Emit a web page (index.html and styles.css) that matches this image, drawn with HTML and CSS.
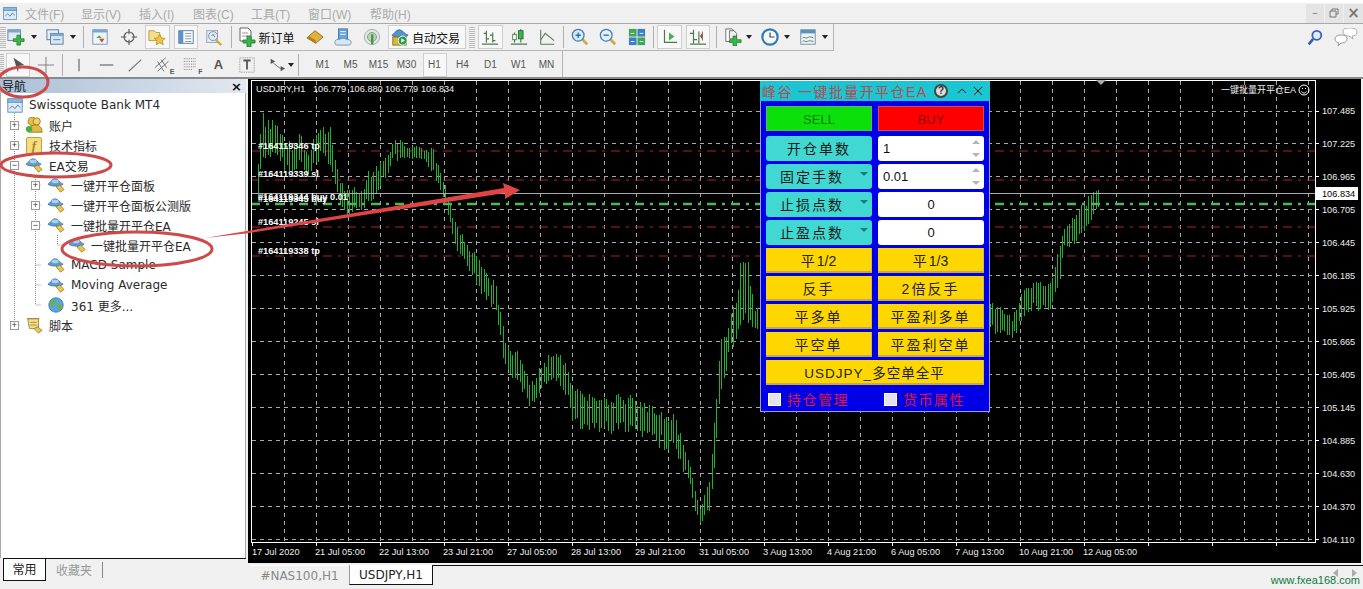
FILE: index.html
```html
<!DOCTYPE html>
<html lang="zh">
<head>
<meta charset="utf-8">
<title>MetaTrader 4</title>
<link rel="stylesheet" href="styles.css">
</head>
<body>
<svg class="defs" width="0" height="0">
  <symbol id="term" viewBox="0 0 20 20"><rect x="2" y="5" width="16" height="13" fill="#dcebf7" stroke="#5b8fbf"/><rect x="2" y="3" width="16" height="4" fill="#8db8dc" stroke="#5b8fbf"/><path d="M4 14l3-3 3 3 3-4 3 3" fill="none" stroke="#4a78a0"/></symbol>
  <symbol id="ea" viewBox="0 0 20 20"><path d="M1 9c3-1 4-6 8-6s5 5 9 6c-2 3-15 3-17 0z" fill="#5b9bd0" stroke="#3b6f9f" stroke-width=".8"/><ellipse cx="9" cy="6" rx="4" ry="2" fill="#a9d1ee"/><path d="M10 12l4-2 5 5-4 3z" fill="#e8c650" stroke="#8c7420" stroke-width=".8"/></symbol>
  <symbol id="acc" viewBox="0 0 20 20"><circle cx="8" cy="6" r="4.500" fill="#e7be4c" stroke="#9a7a1c"/><circle cx="13" cy="6" r="4" fill="#f0cf6c" stroke="#9a7a1c"/><path d="M4 18c0-6 4-8 8-8s7 3 7 8z" fill="#e2b944" stroke="#9a7a1c"/><circle cx="4.500" cy="14.500" r="3.500" fill="#45b045"/></symbol>
  <symbol id="scr" viewBox="0 0 20 20"><path d="M3 3h12v11H5z" fill="#f3dd8f" stroke="#a5842a"/><path d="M2 3h14M6 7h7M6 10h7" stroke="#a5842a" fill="none"/><path d="M10 14l4-2 5 4-4 3z" fill="#e8c650" stroke="#8c7420" stroke-width=".8"/></symbol>
  <symbol id="globe" viewBox="0 0 20 20"><circle cx="10" cy="10" r="8" fill="#5aa5e0" stroke="#3b78b0"/><path d="M5 5c3-2 5 0 5 2s-4 2-4 5-2-1-3-3zM12 9c3-1 5 1 5 3s-3 5-4 3-3-5-1-6z" fill="#6db04a"/></symbol>
  <symbol id="newchart" viewBox="0 0 20 20"><rect x="1" y="2" width="14" height="12" fill="#dfeaf5" stroke="#5b7fa5"/><rect x="1" y="2" width="14" height="3" fill="#7ea6cc"/><path d="M11 8h4v4h4v3h-4v4h-4v-4H7v-3h4z" fill="#3cb54a" stroke="#157a28" stroke-width=".8"/></symbol>
  <symbol id="profiles" viewBox="0 0 20 20"><rect x="1" y="2" width="13" height="11" fill="#e6eff8" stroke="#4f78a5"/><rect x="5" y="6" width="14" height="12" fill="#dbe8f4" stroke="#4f78a5"/><rect x="5" y="6" width="14" height="3" fill="#7ea6cc"/><path d="M8 13h8" stroke="#4f78a5"/></symbol>
  <symbol id="market" viewBox="0 0 20 20"><rect x="2" y="2" width="16" height="16" fill="#eef5fa" stroke="#6b93b8"/><rect x="2" y="2" width="16" height="3" fill="#7ea6cc"/><path d="M6 11l3-3 3 3z" fill="#3cb54a"/><path d="M9 12l3 4 3-4z" fill="#d8402c"/></symbol>
  <symbol id="cross" viewBox="0 0 20 20"><circle cx="10" cy="10" r="5.500" fill="none" stroke="#555" stroke-width="1.200"/><path d="M10 1v6M10 13v6M1 10h6M13 10h6" stroke="#555" stroke-width="1.200"/></symbol>
  <symbol id="fav" viewBox="0 0 20 20"><path d="M1 3h6l2 2h4v9H1z" fill="#f4dd8e" stroke="#b3983d"/><path d="M13 7l2 4 4 .5-3 3 1 4-4-2-4 2 1-4-3-3 4-.5z" fill="#f0c832" stroke="#a5842a" stroke-width=".8"/></symbol>
  <symbol id="nav" viewBox="0 0 20 20"><rect x="2" y="3" width="16" height="14" fill="#fff" stroke="#4f78a5"/><rect x="2" y="3" width="5" height="14" fill="#5c93c8"/><path d="M9 6h7M9 9h7M9 12h7M9 15h7" stroke="#6b93b8"/></symbol>
  <symbol id="tester" viewBox="0 0 20 20"><rect x="2" y="3" width="12" height="13" fill="#e8eef5" stroke="#8aa0b8"/><circle cx="9" cy="9" r="5" fill="#d8ecf8" stroke="#6b93b8"/><path d="M12 13l6 6" stroke="#d6a93b" stroke-width="2.500"/><path d="M7 9l2-2 2 3" fill="none" stroke="#c85050"/></symbol>
  <symbol id="order" viewBox="0 0 20 20"><path d="M3 1h8l3 3v10H3z" fill="#fff" stroke="#666"/><path d="M5 6h6M5 9h6" stroke="#999"/><path d="M10 9h4v4h4v3h-4v4h-4v-4H6v-3h4z" fill="#3cb54a" stroke="#157a28" stroke-width=".8"/></symbol>
  <symbol id="gold" viewBox="0 0 20 20"><path d="M1 11L10 3l9 7-8 7z" fill="#e2b13c" stroke="#8c6a1c"/><path d="M1 11l10 6v-3L3 9z" fill="#b47f20"/></symbol>
  <symbol id="cloud" viewBox="0 0 20 20"><rect x="5" y="1" width="10" height="11" fill="#6aa5d8" stroke="#3b78b0"/><path d="M7 4h6M7 7h6" stroke="#fff"/><path d="M1 16c0-3 3-4 5-3 1-2 7-2 8 0 3-1 5 1 5 3s-1 3-3 3H4c-2 0-3-1-3-3z" fill="#d6e6f2" stroke="#6b93b8"/></symbol>
  <symbol id="signal" viewBox="0 0 20 20"><circle cx="10" cy="10" r="8.500" fill="#dfe8ea" stroke="#9aa8aa"/><circle cx="10" cy="10" r="5" fill="#b7d4b0" stroke="#7a9a78"/><rect x="9" y="7" width="2.500" height="11" fill="#4e8f3e"/></symbol>
  <symbol id="auto" viewBox="0 0 20 20"><path d="M1 8c3-1 4-6 8-6s6 5 10 6c-3 3-15 3-18 0z" fill="#4f98cf" stroke="#2f6f9f"/><rect x="2" y="10" width="15" height="9" fill="#d9b93c" stroke="#8c7420"/><circle cx="13" cy="14" r="5" fill="#21a04a" stroke="#fff"/><path d="M11.500 11.500l4 2.500-4 2.500z" fill="#fff"/></symbol>
  <symbol id="bars" viewBox="0 0 20 20"><path d="M6 3v13M3 6h3M6 12h3M13 5v11M10 8h3M13 14h3M1 18h18" fill="none" stroke="#4a7a4a" stroke-width="1.300"/></symbol>
  <symbol id="candle" viewBox="0 0 20 20"><path d="M5 5v11M12 1v15M1 18h18" stroke="#4a7a4a" stroke-width="1.300"/><rect x="3" y="7" width="4" height="6" fill="#fff" stroke="#4a7a4a"/><rect x="9.500" y="3" width="5" height="9" fill="#36b54a" stroke="#2a6a2a"/></symbol>
  <symbol id="line" viewBox="0 0 20 20"><path d="M3 2v16h15" fill="none" stroke="#5a7a5a" stroke-width="1.200"/><path d="M3 13l5-7 10 8" fill="none" stroke="#5a7a5a" stroke-width="1.200"/></symbol>
  <symbol id="zin" viewBox="0 0 20 20"><path d="M12 12l6 6" stroke="#d6a93b" stroke-width="3"/><circle cx="8" cy="8" r="6.500" fill="#d5eafa" stroke="#3f7fb8" stroke-width="1.400"/><path d="M5 8h6M8 5v6" stroke="#2f6fa8" stroke-width="1.500"/></symbol>
  <symbol id="zout" viewBox="0 0 20 20"><path d="M12 12l6 6" stroke="#d6a93b" stroke-width="3"/><circle cx="8" cy="8" r="6.500" fill="#e2f1fb" stroke="#3f7fb8" stroke-width="1.400"/><path d="M5 8h6" stroke="#2f6fa8" stroke-width="1.500"/></symbol>
  <symbol id="tile" viewBox="0 0 20 20"><rect x="1" y="1" width="8.500" height="8.500" fill="#3ea85a"/><rect x="10.500" y="1" width="8.500" height="8.500" fill="#3b7fc4"/><rect x="1" y="10.500" width="8.500" height="8.500" fill="#3b7fc4"/><rect x="10.500" y="10.500" width="8.500" height="8.500" fill="#3ea85a"/><path d="M3 6h4M13 6h4M3 15h4M13 15h4" stroke="#fff"/></symbol>
  <symbol id="scroll" viewBox="0 0 20 20"><path d="M5 2v14h14M5 7v6" fill="none" stroke="#4a7a4a" stroke-width="1.300"/><path d="M10 5l6 4.500-6 4.500z" fill="#3cb54a"/></symbol>
  <symbol id="shift" viewBox="0 0 20 20"><path d="M5 2v15M1 6h4M5 13h4M11 4v13M1 18h18" fill="none" stroke="#4a7a4a" stroke-width="1.300"/><path d="M15 5l-3 4 3 4z" fill="#d8402c"/><path d="M15 4v10" stroke="#666"/></symbol>
  <symbol id="tpl" viewBox="0 0 20 20"><path d="M2 1h7l3 3v11H2z" fill="#fff" stroke="#666"/><path d="M6 3h5l3 3v6H6z" fill="#eee" stroke="#666"/><path d="M10 9h4v4h5v3h-5v4h-4v-4H6v-3h4z" fill="#3cb54a" stroke="#157a28" stroke-width=".8"/></symbol>
  <symbol id="clock" viewBox="0 0 20 20"><circle cx="10" cy="10" r="8.500" fill="#f4f8fb" stroke="#2f78b8" stroke-width="2.400"/><path d="M10 5v5h5" fill="none" stroke="#444" stroke-width="1.300"/></symbol>
  <symbol id="indic" viewBox="0 0 20 20"><rect x="2" y="2" width="16" height="16" fill="#eef2f5" stroke="#6b8aa5"/><rect x="2" y="2" width="16" height="4" fill="#5f90bd"/><path d="M4 11c2-2 3 1 5 0s3-2 7 0M4 15c2-2 3 1 5 0s3-1 7 0" fill="none" stroke="#5a7a5a"/></symbol>
  <symbol id="search" viewBox="0 0 20 20"><circle cx="12" cy="7" r="5" fill="#dfeaf8" stroke="#3a5fb0" stroke-width="2"/><path d="M8 11l-5 6" stroke="#3a5fb0" stroke-width="3"/></symbol>
  <symbol id="chat" viewBox="0 0 24 20"><path d="M9 3c0-2 3-3 7-3s7 1 7 4-3 4-5 4l1 3-4-3c-4 0-6-2-6-5z" fill="#fff" stroke="#aaa"/><path d="M1 11c0-3 3-4 6-4s6 1 6 4-3 4-6 4l-3 3 1-3c-2 0-4-2-4-4z" fill="#fff" stroke="#999"/></symbol>
  <symbol id="pointer" viewBox="0 0 20 20"><path d="M5 2l12 8-6 1-1 7z" fill="#555"/></symbol>
  <symbol id="thin" viewBox="0 0 20 20"><path d="M10 1v18M1 10h18" stroke="#777"/></symbol>
  <symbol id="vline" viewBox="0 0 20 20"><path d="M10 3v14" stroke="#666" stroke-width="1.300"/></symbol>
  <symbol id="hline" viewBox="0 0 20 20"><path d="M2 10h15" stroke="#666" stroke-width="1.300"/></symbol>
  <symbol id="trend" viewBox="0 0 20 20"><path d="M3 17L17 4" stroke="#777" stroke-width="1.300"/></symbol>
  <symbol id="channel" viewBox="0 0 20 20"><path d="M1 13L13 2M4 17L16 6M4 6l7 11M8 4l6 9" stroke="#666" fill="none"/></symbol>
  <symbol id="fib" viewBox="0 0 20 20"><path d="M2 3h14M2 6h14M2 9h14M2 12h14M2 15h10" stroke="#777" stroke-dasharray="1 1"/></symbol>
  <symbol id="textlbl" viewBox="0 0 20 20"><rect x="2" y="2" width="16" height="16" fill="none" stroke="#888" stroke-dasharray="1 1"/><path d="M6 5h8M10 5v10" stroke="#555" stroke-width="2"/></symbol>
  <symbol id="arrows" viewBox="0 0 20 20"><path d="M3 3l5 3-5 3zM14 11l5 3-5 3z" fill="#555"/><path d="M6 8l8 6" stroke="#666"/></symbol>
</svg>

<div class="app">
  <header class="menubar">
    <svg class="ic menu-ic"><use href="#term"/></svg>
    <nav class="menus">
      <span class="m1">文件(F)</span><span class="m2">显示(V)</span><span class="m3">插入(I)</span><span class="m4">图表(C)</span><span class="m5">工具(T)</span><span class="m6">窗口(W)</span><span class="m7">帮助(H)</span>
    </nav>
    <div class="winbtns"><span>–</span><span><svg class="rest" viewBox="0 0 10 10"><path d="M3 3V1h6v5H7M1 3h6v6H1z" fill="none" stroke="#777"/></svg></span><span class="x">×</span></div>
  </header>

  <div class="bar bar1">
    <div class="bar-l">
      <i class="grip"></i>
      <span class="b w20"><svg class="ic"><use href="#newchart"/></svg></span><i class="caret w16"></i><i class="sp2"></i>
      <span class="b w22"><svg class="ic"><use href="#profiles"/></svg></span><i class="caret w14"></i>
      <i class="sep w6"></i>
      <span class="b"><svg class="ic"><use href="#market"/></svg></span>
      <span class="b"><svg class="ic"><use href="#cross"/></svg></span>
      <span class="b on"><svg class="ic"><use href="#fav"/></svg></span>
      <span class="b on"><svg class="ic"><use href="#nav"/></svg></span>
      <span class="b"><svg class="ic"><use href="#tester"/></svg></span>
      <i class="sep w5"></i>
      <span class="neword"><svg class="ic"><use href="#order"/></svg><span>新订单</span></span>
      <span class="b"><svg class="ic"><use href="#gold"/></svg></span>
      <span class="b"><svg class="ic"><use href="#cloud"/></svg></span>
      <span class="b"><svg class="ic"><use href="#signal"/></svg></span>
      <span class="autob"><svg class="ic"><use href="#auto"/></svg><span>自动交易</span></span>
      <i class="grip gl"></i>
      <span class="b on"><svg class="ic"><use href="#bars"/></svg></span>
      <span class="b"><svg class="ic"><use href="#candle"/></svg></span>
      <span class="b"><svg class="ic"><use href="#line"/></svg></span>
      <i class="sep w4"></i>
      <span class="b"><svg class="ic"><use href="#zin"/></svg></span>
      <span class="b"><svg class="ic"><use href="#zout"/></svg></span>
      <span class="b"><svg class="ic"><use href="#tile"/></svg></span>
      <i class="sep w4"></i>
      <span class="b on"><svg class="ic"><use href="#scroll"/></svg></span>
      <span class="b on"><svg class="ic"><use href="#shift"/></svg></span>
      <i class="sep w9"></i>
      <span class="b w24"><svg class="ic"><use href="#tpl"/></svg></span><i class="caret w8"></i><i class="sp5"></i>
      <span class="b w24"><svg class="ic"><use href="#clock"/></svg></span><i class="caret w9"></i><i class="sp5"></i>
      <span class="b w24"><svg class="ic"><use href="#indic"/></svg></span><i class="caret w9"></i>
    </div>
    <div class="bar-r">
      <svg class="ic srch"><use href="#search"/></svg>
      <svg class="ic chat"><use href="#chat"/></svg>
    </div>
  </div>

  <div class="bar bar2">
    <div class="bar-l">
      <i class="grip g2"></i>
      <span class="b on"><svg class="ic"><use href="#pointer"/></svg></span>
      <span class="b"><svg class="ic"><use href="#thin"/></svg></span>
      <i class="sep w4"></i>
      <span class="b n"><svg class="ic"><use href="#vline"/></svg></span>
      <span class="b n"><svg class="ic"><use href="#hline"/></svg></span>
      <span class="b n"><svg class="ic"><use href="#trend"/></svg></span>
      <span class="b n"><svg class="ic"><use href="#channel"/></svg><em class="sub">E</em></span>
      <span class="b n"><svg class="ic"><use href="#fib"/></svg><em class="sub">F</em></span>
      <span class="b n tool-a">A</span>
      <span class="b n"><svg class="ic"><use href="#textlbl"/></svg></span>
      <span class="b n sp-l"><svg class="ic"><use href="#arrows"/></svg></span><i class="caret w8 cn"></i>
      <i class="sep w8"></i><i class="sp6"></i>
      <span class="b n per">M1</span><span class="b n per">M5</span><span class="b n per">M15</span><span class="b n per">M30</span><span class="b n per on">H1</span><span class="b n per">H4</span><span class="b n per">D1</span><span class="b n per">W1</span><span class="b n per">MN</span>
    </div>
  </div>

  <main class="main">
    <aside class="nav">
      <div class="nav-title"><span>导航</span><b>×</b></div>
      <div class="tree">
        <svg class="conn" viewBox="0 0 100 250" width="100" height="250">
          <path d="M14.500 28V240M35.500 90V220M57.500 150V160M14.500 40h5M14.500 60h5M14.500 80h5M14.500 240h5M35.500 100h5M35.500 120h5M35.500 140h5M35.500 180h5M35.500 200h5M35.500 220h5M57.500 160h6" fill="none" stroke="#888" stroke-dasharray="1 1"/>
        </svg>
        <div class="row r0"><svg class="ic"><use href="#term"/></svg><span>Swissquote Bank MT4</span></div>
        <div class="row r1"><i class="ex">+</i><svg class="ic"><use href="#acc"/></svg><span>账户</span></div>
        <div class="row r1"><i class="ex">+</i><span class="fic">f</span><span>技术指标</span></div>
        <div class="row r1"><i class="ex">−</i><svg class="ic"><use href="#ea"/></svg><span>EA交易</span></div>
        <div class="row r2"><i class="ex">+</i><svg class="ic"><use href="#ea"/></svg><span>一键开平仓面板</span></div>
        <div class="row r2"><i class="ex">+</i><svg class="ic"><use href="#ea"/></svg><span>一键开平仓面板公测版</span></div>
        <div class="row r2"><i class="ex">−</i><svg class="ic"><use href="#ea"/></svg><span>一键批量开平仓EA</span></div>
        <div class="row r3"><svg class="ic"><use href="#ea"/></svg><span>一键批量开平仓EA</span></div>
        <div class="row r2"><i class="ex no"></i><svg class="ic"><use href="#ea"/></svg><span>MACD Sample</span></div>
        <div class="row r2"><i class="ex no"></i><svg class="ic"><use href="#ea"/></svg><span>Moving Average</span></div>
        <div class="row r2"><i class="ex no"></i><svg class="ic"><use href="#globe"/></svg><span>361 更多...</span></div>
        <div class="row r1"><i class="ex">+</i><svg class="ic"><use href="#scr"/></svg><span>脚本</span></div>
      </div>
      <div class="nav-tabs"><span class="t-on">常用</span><span class="t-off">收藏夹</span></div>
    </aside>

    <section class="chartcol">
      <div class="chart">
        <svg id="plot" class="plot" viewBox="248 80 1113 484" width="1113" height="484">
          <g id="grid"></g>
          <path d="M251 152H1315M251 181H1315M251 228H1315M251 257H1315" class="redl"/>
          <path id="bars-path" class="cand"/>
          <path d="M251 205H1315" class="greenl"/>
          <path d="M251 194.500H1315" class="bidl"/>
          <rect x="251.500" y="81.500" width="1064" height="462" class="frame"/>
          <path d="M1096 81h10l-5 5z" fill="#aaa"/>
          <g class="t">
            <text x="256" y="93">USDJPY,H1</text><text x="313" y="93">106.779</text><text x="349.500" y="93">106.880</text><text x="385" y="93">106.779</text><text x="421" y="93">106.834</text>
            <text x="1221" y="94" class="cjk">一键批量开平仓EA</text>
          </g>
          <g fill="none" stroke="#fff"><circle cx="1304" cy="91" r="5"/><path d="M1301.500 92.500c1 2 4 2 5 0M1302 89.500h1M1305 89.500h1"/></g>
          <g class="o">
            <text x="258" y="150">#164119346 tp</text><text x="258" y="178">#164119339 sl</text><text x="258" y="201">#164119344 buy 0.01</text><text x="258" y="203">#164119345 buy</text><text x="258" y="226">#164119245 sl</text><text x="258" y="255">#164119338 tp</text>
          </g>
          <g class="t">
            <text x="1322" y="115">107.485</text><text x="1322" y="148">107.225</text><text x="1322" y="181">106.965</text><text x="1322" y="214">106.705</text><text x="1322" y="247">106.445</text><text x="1322" y="280">106.185</text><text x="1322" y="313">105.925</text><text x="1322" y="346">105.665</text><text x="1322" y="379">105.405</text><text x="1322" y="412">105.145</text><text x="1322" y="445">104.885</text><text x="1322" y="478">104.630</text><text x="1322" y="511">104.370</text><text x="1322" y="544">104.110</text>
            <text x="252" y="556">17 Jul 2020</text><text x="315" y="556">21 Jul 05:00</text><text x="379" y="556">22 Jul 13:00</text><text x="443" y="556">23 Jul 21:00</text><text x="507" y="556">27 Jul 05:00</text><text x="571" y="556">28 Jul 13:00</text><text x="635" y="556">29 Jul 21:00</text><text x="699" y="556">31 Jul 05:00</text><text x="763" y="556">3 Aug 13:00</text><text x="827" y="556">4 Aug 21:00</text><text x="891" y="556">6 Aug 05:00</text><text x="955" y="556">7 Aug 13:00</text><text x="1019" y="556">10 Aug 21:00</text><text x="1083" y="556">12 Aug 05:00</text>
          </g>
          <rect x="1316" y="188" width="42" height="13" fill="#fff"/>
          <text x="1322" y="198" class="tb">106.834</text>
        </svg>

        <div class="ea">
          <div class="ea-head">
            <span class="ea-title">峰谷 一键批量开平仓EA</span>
            <i class="ea-q">?</i><svg class="ea-up" viewBox="0 0 10 10"><path d="M1 7l4-4 4 4" fill="none" stroke="#111"/></svg><svg class="ea-x" viewBox="0 0 10 10"><path d="M1 1l8 8M9 1l-8 8" stroke="#111"/></svg>
          </div>
          <div class="ea-body">
            <div class="ea-grid">
              <div class="btn sell">SELL</div><div class="btn buy">BUY</div>
              <div class="btn tq">开仓单数</div><div class="inp">1<i class="spin"></i></div>
              <div class="btn tq dd">固定手数</div><div class="inp">0.01<i class="spin"></i></div>
              <div class="btn tq dd">止损点数</div><div class="inp c">0</div>
              <div class="btn tq dd">止盈点数</div><div class="inp c">0</div>
              <div class="btn ye frac">平 1/2</div><div class="btn ye frac">平 1/3</div>
              <div class="btn ye">反手</div><div class="btn ye">2倍反手</div>
              <div class="btn ye">平多单</div><div class="btn ye">平盈利多单</div>
              <div class="btn ye">平空单</div><div class="btn ye">平盈利空单</div>
              <div class="btn ye full">USDJPY_多空单全平</div>
            </div>
            <div class="ea-checks">
              <label><i class="cb"></i>持仓管理</label>
              <label><i class="cb"></i>货币属性</label>
            </div>
          </div>
        </div>
      </div>
      <div class="ctabs">
        <span class="ct off">#NAS100,H1</span><span class="ct act">USDJPY,H1</span>
        <div class="ct-end"><i class="tl"></i><i class="tr"></i><em>www.fxea168.com</em></div>
      </div>
    </section>
  </main>
</div>

<svg class="annot" viewBox="0 0 1363 589" width="1363" height="589">
  <ellipse cx="23" cy="82" rx="25" ry="15" class="ring"/>
  <ellipse cx="56" cy="165" rx="55" ry="12" class="ring"/>
  <ellipse cx="137" cy="249" rx="75" ry="17" class="ring"/>
  <path d="M205 238L504 188L503 183L520 190L505 199L505 193L250 233z" fill="#e04444"/>
</svg>
<script src="chart.js"></script>
</body>
</html>
```
FILE: styles.css
```css
* { box-sizing: border-box; }
html, body { margin: 0; padding: 0; }
body { width: 1363px; height: 589px; overflow: hidden; position: relative; background: #f0f0f0; font: 12px "DejaVu Sans", "Noto Sans CJK SC", sans-serif; color: #222; }
.defs { position: absolute; }
.app { display: flex; flex-direction: column; height: 589px; }
.ic { width: 20px; height: 20px; flex: none; display: block; }

.menubar { height: 24px; flex: none; display: flex; align-items: center; border-bottom: 1px solid #a8a8a8; border-top: 3px solid #fff; position: relative; }
.menu-ic { width: 16px; height: 16px; margin-left: 2px; }
.menus { display: flex; margin-left: 7px; color: #aaa; font: 12px "Liberation Sans", "Noto Sans CJK SC", sans-serif; }
.m1 { width: 56px; } .m2 { width: 58px; } .m3 { width: 54px; } .m4 { width: 58px; } .m5 { width: 57px; } .m6 { width: 62px; }
.winbtns { margin-left: auto; display: flex; gap: 1px; height: 19px; }
.winbtns span { width: 18px; background: #e4e4e4; color: #777; text-align: center; font: 11px/18px "DejaVu Sans", sans-serif; display: flex; align-items: center; justify-content: center; }
.winbtns .x { font: bold 15px/18px "DejaVu Sans", sans-serif; width: 19px; }
.rest { width: 10px; height: 10px; display: block; }

.bar { flex: none; height: 27px; display: flex; align-items: center; }
.bar-l { display: flex; align-items: center; height: 100%; border-right: 1px solid #b5b5b5; }
.bar1 .bar-l { width: 834px; border-bottom: 1px solid #b5b5b5; }
.bar1 { justify-content: space-between; }
.bar2 .bar-l { width: 563px; }
.bar-r { display: flex; gap: 10px; padding-right: 5px; align-items: center; }
.chat { width: 24px; }
.srch { width: 18px; height: 18px; }

.grip { width: 6px; height: 21px; flex: none; background: repeating-linear-gradient(#bbb 0 1px, transparent 1px 2px); }
.g2 { width: 3.500px; }
.gl { margin: 0 1px 0 3px; }
.b { width: 28.500px; height: 24px; flex: none; display: flex; align-items: center; justify-content: center; position: relative; font: 10px "Liberation Sans", sans-serif; color: #555; }
.b.n { width: 28px; }
.b.w20 { width: 20px; } .b.w22 { width: 22px; } .b.w24 { width: 24px; }
.b .ic { width: 18px; height: 18px; }
.on { isolation: isolate; }
.on::before { content: ""; position: absolute; inset: 0 2px; z-index: -1; background: #f8f8f8; border: 1px solid #cfcfcf; }
.sub { position: absolute; right: 2px; bottom: 2px; font: bold 7px "Liberation Sans", sans-serif; color: #555; }
.per { font-size: 10px; color: #555; }
.tool-a { font: bold 13px "Liberation Sans", sans-serif; color: #555; }
.sp-l { margin-left: 2px; margin-right: -4px; }
.caret { flex: none; height: 4px; position: relative; display: block; }
.caret::after { content: ""; position: absolute; left: 50%; margin-left: -3px; top: 0; border: 3px solid transparent; border-top: 4px solid #222; border-bottom: 0; }
.w16 { width: 16px; } .w14 { width: 14px; } .w8 { width: 8px; } .w9 { width: 9px; }
.sp2 { width: 2px; flex: none; } .sp5 { width: 5px; flex: none; } .sp6 { width: 6px; flex: none; }
.sep { flex: none; height: 22px; display: flex; justify-content: center; position: relative; }
.sep::after { content: ""; width: 1px; background: #b0b0b0; }
.sep.w6 { width: 6px; } .sep.w5 { width: 5px; } .sep.w4 { width: 4px; } .sep.w9 { width: 9px; } .sep.w8 { width: 8px; }

.neword { display: flex; align-items: center; width: 67px; flex: none; padding-left: 3px; gap: 2px; font-size: 12px; font-family: "Noto Sans CJK SC", sans-serif; color: #111; }
.autob { margin-left: 2px; width: 78px; height: 24px; flex: none; display: flex; align-items: center; gap: 3px; padding-left: 2px; background: #f8f8f8; border: 1px solid #cfcfcf; font: 12px "Noto Sans CJK SC", sans-serif; color: #111; }
.autob .ic { width: 18px; height: 18px; }

.main { flex: 1; display: flex; border-top: 2px solid #8a8a8a; margin-top: -1px; min-height: 0; }
.nav { width: 248px; flex: none; display: flex; flex-direction: column; padding: 0 2px 4px 0; }
.nav-title { height: 14px; flex: none; display: flex; justify-content: space-between; align-items: center; padding: 0 4px 0 2px; background: linear-gradient(90deg, #aabfd8, #e3e8ef); color: #111; font: 12px/14px "Noto Sans CJK SC", sans-serif; }
.nav-title b { font: bold 13px "DejaVu Sans", sans-serif; }
.tree { flex: 1; background: #fff; border-left: 1px solid #a8a8a8; border-right: 1px solid #a8a8a8; padding-top: 2px; position: relative; }
.conn { position: absolute; left: -1px; top: -8px; }
.row { height: 20px; display: flex; align-items: center; position: relative; color: #2a2a2a; white-space: nowrap; }
.row .ic { width: 18px; height: 18px; }
.r0 { padding-left: 5px; } .r0 .ic { margin-right: 5px; }
.r1 { padding-left: 9px; } .r1 .ic { margin: 0 6px 0 6px; }
.r2 { padding-left: 30px; } .r2 .ic { margin: 0 6px 0 7px; }
.r3 { padding-left: 67px; } .r3 .ic { margin: 0 5px 0 0; }
.fic { width: 16px; height: 17px; margin: 0 7px 0 7px; flex: none; background: #f5dd80; border: 1px solid #c0a040; border-radius: 2px; text-align: center; color: #a5842a; font: italic bold 13px/15px "Liberation Serif", serif; }
.ex { width: 9px; height: 9px; flex: none; border: 1px solid #999; background: #fff; color: #333; font: normal 9px/7px "Liberation Sans", sans-serif; text-align: center; }
.ex.no { border: 0; background: none; }
.nav-tabs { height: 27px; flex: none; display: flex; align-items: flex-start; border-top: 1px solid #111; margin: 0 0 0 3px; font: 12px "Noto Sans CJK SC", sans-serif; }
.t-on { width: 43px; height: 22px; background: #fff; border: 1px solid #111; border-top: 0; text-align: center; line-height: 20px; color: #222; }
.t-off { margin-top: 3px; width: 57px; height: 16px; line-height: 15px; text-align: center; color: #999; border-right: 1px solid #888; }

.chartcol { flex: 1; display: flex; flex-direction: column; min-width: 0; }
.chart { height: 484px; flex: none; width: 1113px; background: #000; position: relative; }
.plot { display: block; }
.redl { stroke: #b02030; stroke-dasharray: 9 6 3 6; fill: none; }
.cand { stroke: #22b030; fill: none; stroke-width: 1; }
.greenl { stroke: #4cba54; stroke-width: 2.500; stroke-dasharray: 9 6 3 6; fill: none; }
.bidl { stroke: #aaa; fill: none; }
.frame { fill: none; stroke: #fff; }
.t text { font: 9.200px "Liberation Sans", "Noto Sans CJK SC", sans-serif; fill: #eee; }
.t .cjk { font-size: 9px; }
.tb { font: 9.200px "Liberation Sans", sans-serif; fill: #000; }
.o text { font: bold 9.200px "Liberation Sans", sans-serif; fill: #fff; }

.ea { position: absolute; left: 512px; top: 2px; width: 230px; height: 331px; display: flex; flex-direction: column; }
.ea-head { height: 20px; flex: none; background: #19c6d2; display: flex; align-items: center; padding-left: 2px; }
.ea-title { width: 170px; color: #b84a50; white-space: nowrap; font: 14px "Liberation Sans", "Noto Sans CJK SC", sans-serif; letter-spacing: 1.400px; }
.ea-q { width: 14px; height: 14px; margin-left: 2px; flex: none; border-radius: 50%; border: 2px solid #444; background: #ddd; font: bold 10px/10px "Liberation Sans", sans-serif; text-align: center; color: #333; }
.ea-up, .ea-x { width: 10px; height: 10px; flex: none; }
.ea-up { margin-left: 9px; } .ea-x { margin-left: 6px; }
.ea-body { flex: 1; background: #0000e6; padding: 5px 6px 0; border: 1px solid #9a9ae8; border-top: 0; }
.ea-grid { display: grid; grid-template-columns: 106px 106px; grid-template-rows: 27px; grid-auto-rows: 25px; column-gap: 6px; row-gap: 3px; margin-left: -1px; }
.btn { display: flex; align-items: center; justify-content: center; font: 14px "Liberation Sans", "Noto Sans CJK SC", sans-serif; letter-spacing: 2px; color: #1a1a1a; position: relative; }
.sell { background: #0be00b; color: #0a7a0a; letter-spacing: 0; font-size: 13px; border: 1px solid #5cb85c; margin-bottom: 2px; padding-top: 2px; }
.buy { background: #ff0000; color: #8c0a0a; letter-spacing: 0; font-size: 13px; border: 1px solid #c85050; margin-bottom: 2px; padding-top: 2px; }
.tq { background: #40d8d0; border-radius: 3px; padding-bottom: 2px; }
.dd { padding-right: 14px; }
.dd::after { content: ""; position: absolute; right: 4px; top: 8px; border: 4px solid transparent; border-top: 4px solid #167a7a; border-bottom: 0; }
.ye { background: #ffd700; border-bottom: 2px solid #c8a848; border-right: 1px solid #d0b860; color: #222; }
.frac { letter-spacing: 0; word-spacing: -2px; }
.full { grid-column: 1 / 3; letter-spacing: 1px; font-size: 13.500px; }
.inp { background: #fff; border-radius: 3px; display: flex; align-items: center; padding-left: 5px; font: 13px "Liberation Sans", sans-serif; color: #111; position: relative; }
.inp.c { justify-content: center; padding: 0; }
.spin { position: absolute; right: 3px; top: 5px; width: 9px; height: 15px; }
.spin::before, .spin::after { content: ""; position: absolute; left: 0; border: 4px solid transparent; }
.spin::before { top: -1px; border-bottom: 4px solid #b5b5b5; border-top: 0; }
.spin::after { bottom: -1px; border-top: 4px solid #b5b5b5; border-bottom: 0; }
.ea-checks { display: flex; margin: 4px 0 0 1px; color: #e0143c; font: 14px "Noto Sans CJK SC", sans-serif; letter-spacing: 1.500px; }
.ea-checks label { display: flex; align-items: center; gap: 6px; width: 116px; flex: none; }
.cb { width: 13px; height: 13px; background: #e2e2ea; border: 1px solid #fff; }

.ctabs { height: 21px; flex: none; display: flex; margin-top: 2px; font: 12px "DejaVu Sans", sans-serif; }
.ct { height: 20px; display: flex; align-items: center; justify-content: center; }
.off { width: 99px; color: #888; border-top: 1px solid #fff; margin-left: 2px; }
.act { width: 84px; background: #fff; border: 1px solid #111; border-top: 0; border-left: 1px solid #999; color: #222; }
.ct-end { flex: 1; border-top: 1px solid #111; position: relative; }
.ct-end em { position: absolute; right: 3px; top: 8px; font: normal 11px "Liberation Sans", sans-serif; color: #0e7a3c; }
.tl, .tr { position: absolute; top: 3px; border: 4px solid transparent; }
.tl { right: 25px; border-right: 5px solid #aaa; border-left: 0; }
.tr { right: 6px; border-left: 5px solid #aaa; border-right: 0; }

.annot { position: absolute; left: 0; top: 0; pointer-events: none; }
.ring { fill: none; stroke: #cc4a4a; stroke-width: 3; }
```
FILE: chart.js
```js
(function () {
  var NS = 'http://www.w3.org/2000/svg';
  var grid = document.getElementById('grid');
  function add(d, dash, col) {
    var p = document.createElementNS(NS, 'path');
    p.setAttribute('d', d);
    p.setAttribute('fill', 'none');
    p.setAttribute('stroke', col);
    if (dash) p.setAttribute('stroke-dasharray', dash);
    grid.appendChild(p);
  }
  var v = '', h = '', tx = '', ty = '', x, y;
  for (x = 284.5; x < 1315; x += 32) v += 'M' + x + ' 82V543';
  for (y = 111.5; y < 542; y += 32.95) { var ry = Math.round(y) + 0.5; h += 'M252 ' + ry + 'H1315'; ty += 'M1315 ' + ry + 'h4'; }
  for (x = 252.5; x < 1315; x += 64) tx += 'M' + x + ' 543v4';
  add(v, '4 4', '#a8a8a8');
  add(h, '4 4', '#a8a8a8');
  add(tx + ty, '', '#fff');

  var k = [[256,178,212],[259,150,200],[262,106,165],[268,120,160],[275,125,160],[285,140,170],[292,148,178],[300,132,165],[306,150,180],[320,128,160],[330,130,168],[336,160,190],[340,185,212],[350,188,214],[360,192,212],[370,165,205],[380,165,190],[390,148,168],[395,140,162],[410,148,162],[425,148,162],[433,146,176],[438,165,192],[446,187,208],[455,222,248],[465,240,262],[480,262,292],[495,285,312],[505,338,372],[520,358,388],[530,385,412],[545,362,388],[560,350,382],[575,388,428],[600,398,432],[625,395,432],[650,408,442],[675,418,452],[690,465,492],[700,510,532],[710,470,512],[720,345,402],[730,318,352],[745,248,332],[755,305,332],[770,300,330],[990,298,332],[1010,318,342],[1030,282,312],[1050,278,308],[1056,258,302],[1065,225,248],[1075,218,246],[1085,200,232],[1100,188,208]];
  var seed = 7;
  function rnd() { seed = (seed * 9301 + 49297) % 233280; return seed / 233280; }
  var d = '', i = 0;
  for (x = 258; x <= 1100; x += 2.4) {
    while (i < k.length - 2 && k[i + 1][0] < x) i++;
    var a = k[i], b = k[i + 1], f = (x - a[0]) / (b[0] - a[0]);
    var t = a[1] + (b[1] - a[1]) * f, u = a[2] + (b[2] - a[2]) * f;
    var mid = (t + u) / 2, half = (u - t) / 2 * (0.6 + rnd() * 0.4), off = (rnd() - 0.5) * (u - t) * 0.3;
    var X = Math.round(x) + 0.5;
    d += 'M' + X + ' ' + (mid + off - half).toFixed(0) + 'V' + (mid + off + half).toFixed(0);
  }
  document.getElementById('bars-path').setAttribute('d', d);
})();
```
